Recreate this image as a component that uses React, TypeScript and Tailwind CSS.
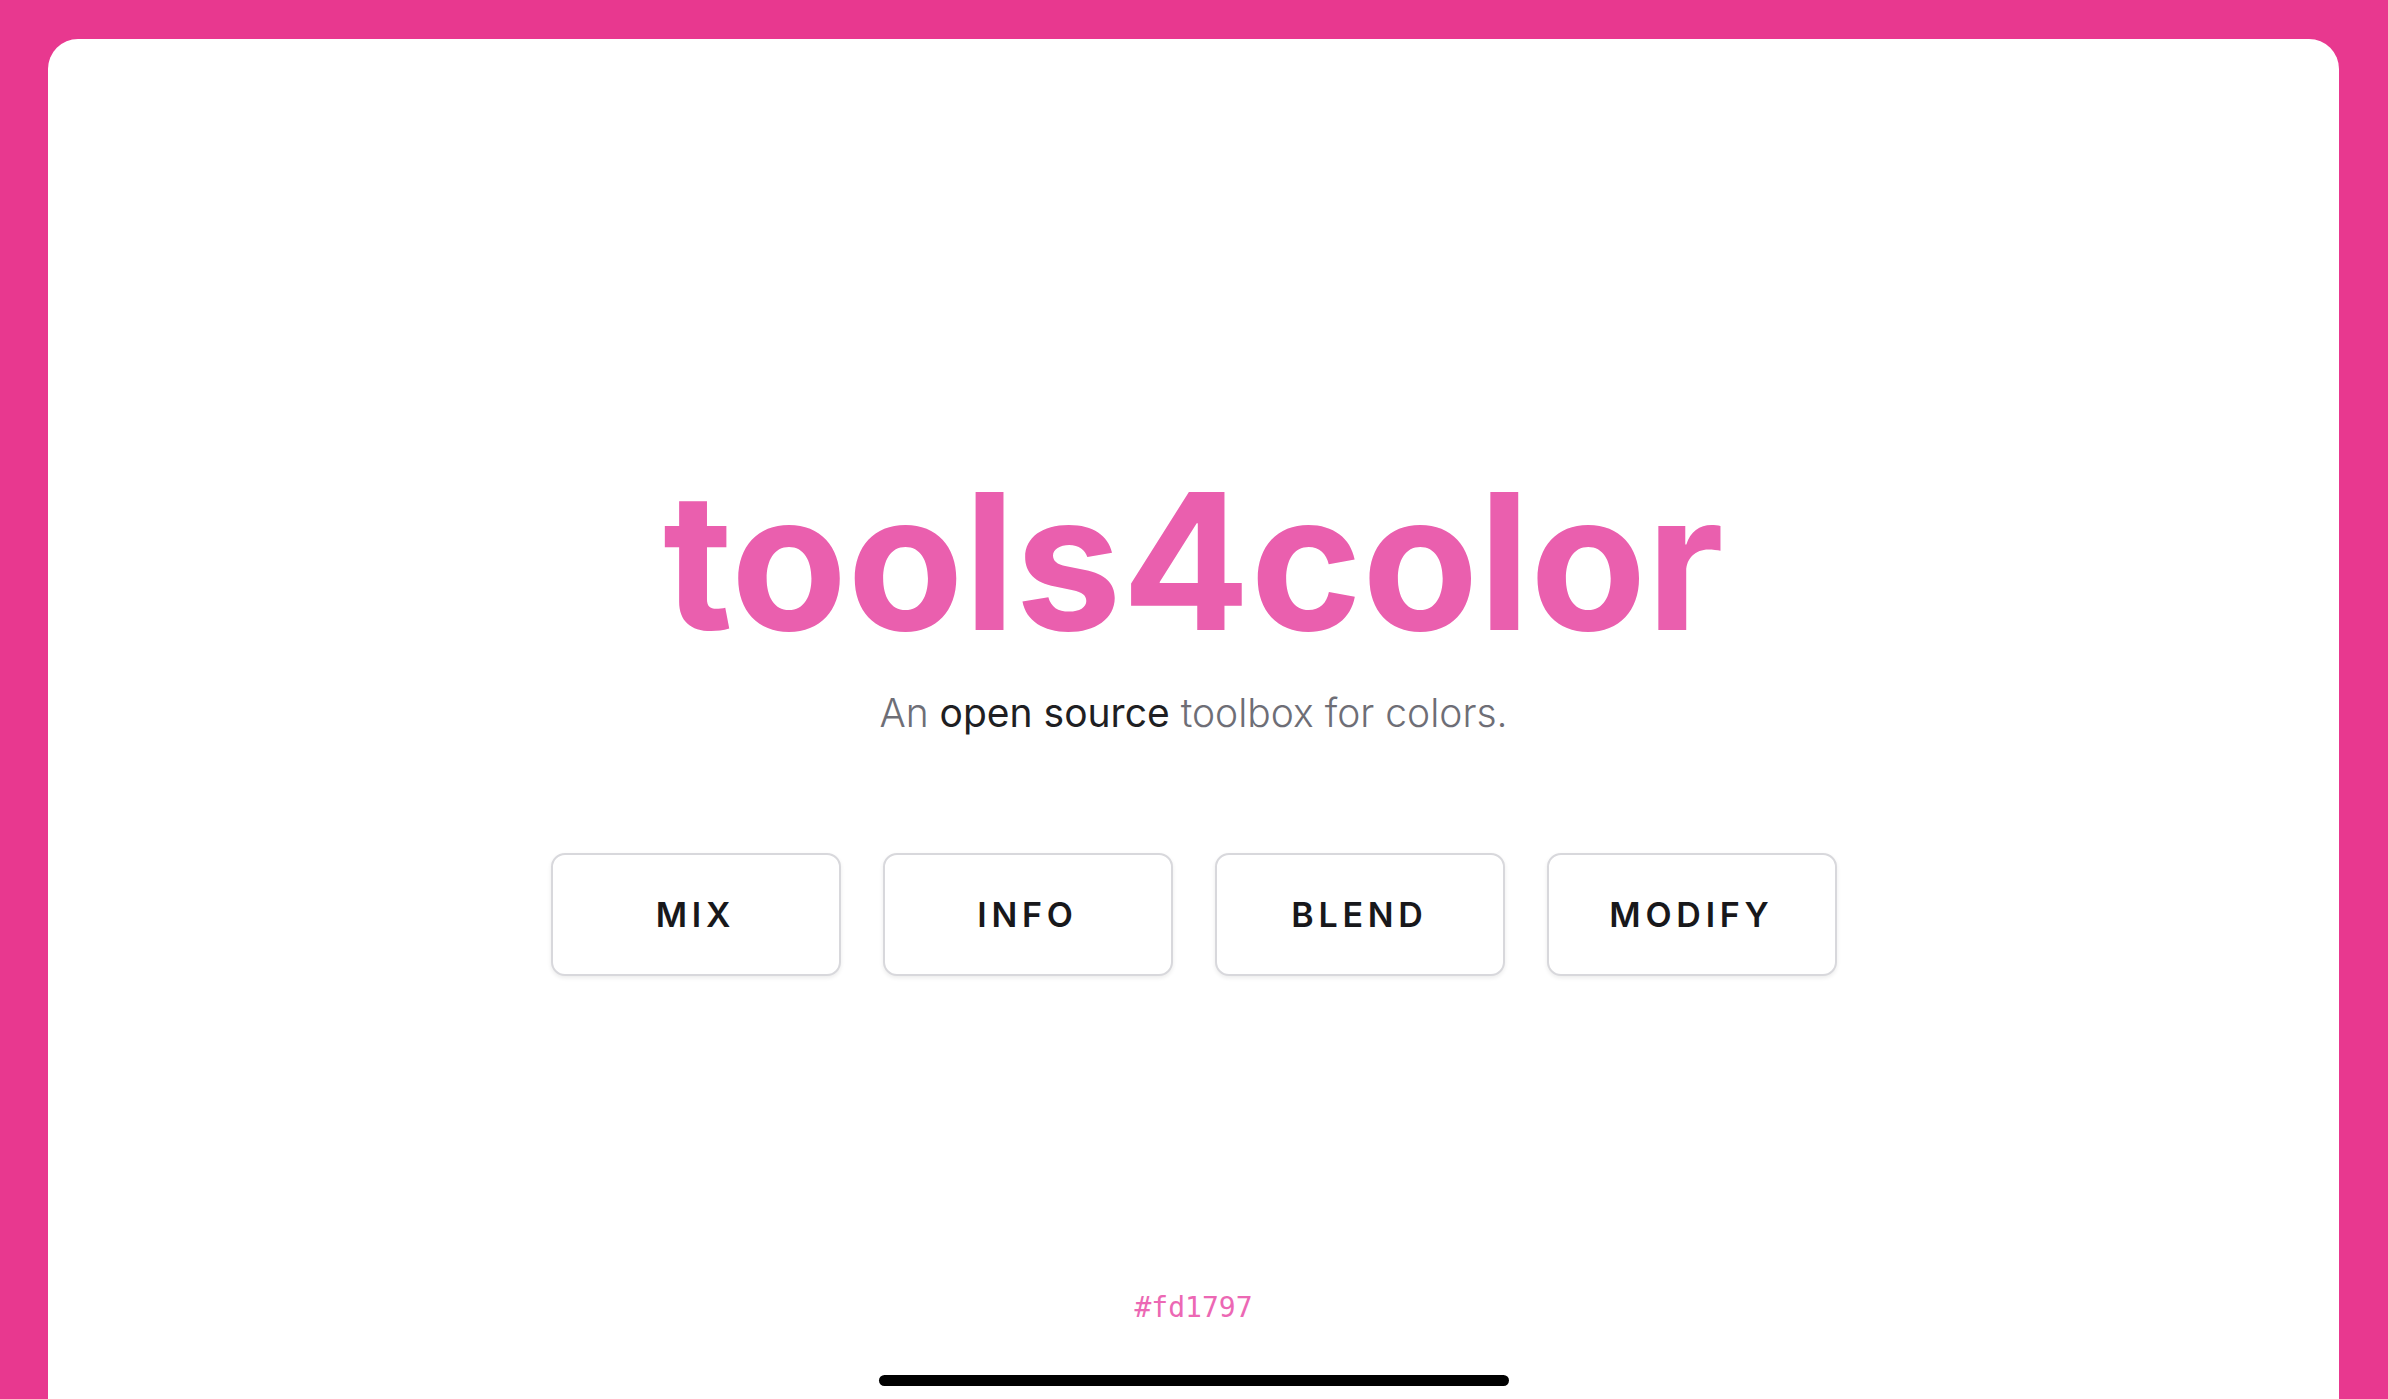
import React from 'react'

const tools = ['MIX', 'INFO', 'BLEND', 'MODIFY']

export default function App() {
  return (
    <div className="h-screen w-full overflow-hidden bg-[#e8388f] pt-[39px] pl-[48px] pr-[49px]">
      <div className="h-[1400px] rounded-[30px] bg-white flex flex-col items-center">
        <h1 className="mt-[427px] text-[190px] leading-none font-bold tracking-[0em] text-[#ea5fae] font-['Inter',sans-serif]">
          tools4color
        </h1>
        <p className="mt-[37px] text-[39px] leading-none font-light text-[#6e6e76] font-['Inter',sans-serif]">
          An <span className="text-[#1f1f23] font-normal">open source</span> toolbox for colors.
        </p>

        <div className="mt-[121px] flex gap-[42px]">
          {tools.map((t) => (
            <button
              key={t}
              className="w-[290px] h-[123px] rounded-[14px] border-2 border-[#d8d8dc] bg-white shadow-[0_2px_4px_rgba(0,0,0,0.08)] text-[34px] font-semibold tracking-[0.14em] text-[#18181b] font-['Inter',sans-serif]"
            >
              {t}
            </button>
          ))}
        </div>

        <div className="mt-[318px] text-[28px] leading-none text-[#ec68b4] font-['DejaVu_Sans_Mono',monospace]">
          #fd1797
        </div>

        <div className="mt-[53px] w-[630px] h-[11px] rounded-full bg-black" />
      </div>
    </div>
  )
}
